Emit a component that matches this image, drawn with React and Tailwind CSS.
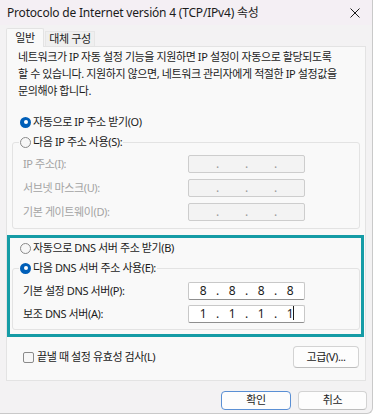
import React from "react";

const FONT = "font-['Noto_Sans','Noto_Sans_CJK_KR',sans-serif]";

function Radio({ checked }) {
  if (checked) {
    return (
      <span className="w-[11px] h-[11px] rounded-full bg-[#005fb8] flex items-center justify-center shrink-0">
        <span className="w-[4px] h-[4px] rounded-full bg-white" />
      </span>
    );
  }
  return (
    <span className="w-[11px] h-[11px] rounded-full border border-[#8a8a8a] bg-[#f7f7f7] shrink-0" />
  );
}

function IpBox({ values, disabled, cursor }) {
  const box = disabled
    ? "bg-[#f3f3f3] border-[#cdcdcd] text-[#9a9a9a]"
    : "bg-white border-[#c8c8c8] border-b-[#8f8f8f] text-[#1b1b1b]";
  return (
    <div
      className={`w-[117px] h-[18px] rounded-[2px] border ${box} flex items-center pl-[1px] text-[12px] leading-none`}
    >
      {[0, 1, 2, 3].map((i) => (
        <React.Fragment key={i}>
          <span className="w-[26px] text-center relative">
            {values ? values[i] : ""}
            {cursor && i === 3 && (
              <span className="absolute left-[16px] top-[-2px] w-px h-[14px] bg-[#1b1b1b]" />
            )}
          </span>
          {i < 3 && <span className="w-[3px] text-center">.</span>}
        </React.Fragment>
      ))}
    </div>
  );
}

function Row({ label, disabled, values, cursor }) {
  return (
    <div className="flex items-center h-[18px]">
      <span
        className={`w-[175px] pl-[10px] ${disabled ? "text-[#a3a3a3]" : "text-[#1b1b1b]"}`}
      >
        {label}
      </span>
      <IpBox values={values} disabled={disabled} cursor={cursor} />
    </div>
  );
}

function Group({ radioLabel, checked, children, className = "" }) {
  return (
    <fieldset
      className={`border border-[#e3e3e3] rounded-[3px] ${className}`}
    >
      <legend className="ml-[6px] px-[1px] flex items-center gap-[2px] h-[16px]">
        <Radio checked={checked} />
        <span className="text-[#1b1b1b]">{radioLabel}</span>
      </legend>
      {children}
    </fieldset>
  );
}

export default function App() {
  return (
    <div className={`w-[375px] h-[418px] bg-white ${FONT} text-[11px] tracking-[-0.4px] text-[#1b1b1b]`}>
      <div className="w-[373px] h-[414px] bg-[#f3f2f3] border-r border-b border-[#c9c9c9] rounded-br-[6px] flex flex-col">
        {/* title bar */}
        <div className="h-[25px] bg-[#f4eff4] flex items-center justify-between pl-[7px] pr-[12px]">
          <span className="text-[12px] tracking-[-0.2px]">
            Protocolo de Internet versión 4 (TCP/IPv4) 속성
          </span>
          <svg width="10" height="10" viewBox="0 0 10 10">
            <path d="M0.5 0.5 L9.5 9.5 M9.5 0.5 L0.5 9.5" stroke="#1b1b1b" strokeWidth="1" />
          </svg>
        </div>

        {/* tabs */}
        <div className="h-[21px] pl-[6px] flex items-end">
          <div className="h-[19px] w-[38px] bg-[#f9f9f9] border border-b-0 border-[#e3e3e3] rounded-t-[2px] flex items-center justify-center relative z-10 -mb-px">
            일반
          </div>
          <div className="h-[15px] w-[50px] ml-px bg-[#efefef] border border-b-0 border-[#e6e6e6] flex items-center justify-center">
            대체 구성
          </div>
        </div>

        {/* panel */}
        <div className="ml-[6px] w-[360px] h-[335px] border border-[#e3e3e3] bg-[#f9f9f9] px-[5px] flex flex-col">
          <p className="pl-[6px] pt-[1px] leading-[17px]">
            네트워크가 IP 자동 설정 기능을 지원하면 IP 설정이 자동으로 할당되도록
            <br />
            할 수 있습니다. 지원하지 않으면, 네트워크 관리자에게 적절한 IP 설정값을
            <br />
            문의해야 합니다.
          </p>

          <div className="mt-[15px] h-[16px] flex items-center gap-[2px] pl-[8px]">
            <Radio checked />
            <span>자동으로 IP 주소 받기(O)</span>
          </div>

          <Group radioLabel="다음 IP 주소 사용(S):" className="mt-[4px] h-[95px] pb-[7px]">
            <div className="flex flex-col gap-[6px] pt-[5px]">
              <Row label="IP 주소(I):" disabled />
              <Row label="서브넷 마스크(U):" disabled />
              <Row label="기본 게이트웨이(D):" disabled />
            </div>
          </Group>

          <div className="mt-[6px] -ml-[5px] w-[357px] border-[3px] border-[#159ca6] pl-[2px] pr-[1px] pt-[2px] pb-[4px]">
            <div className="h-[16px] flex items-center gap-[2px] pl-[8px]">
              <Radio />
              <span>자동으로 DNS 서버 주소 받기(B)</span>
            </div>
            <Group radioLabel="다음 DNS 서버 주소 사용(E):" checked className="mt-[4px] pb-[6px]">
              <div className="flex flex-col gap-[5px] pt-[6px]">
                <Row label="기본 설정 DNS 서버(P):" values={["8", "8", "8", "8"]} />
                <Row label="보조 DNS 서버(A):" values={["1", "1", "1", "1"]} cursor />
              </div>
            </Group>
          </div>

          <div className="mt-[9px] flex items-center justify-between pl-[11px] pr-[1px]">
            <div className="flex items-center gap-[3px]">
              <span className="w-[11px] h-[11px] rounded-[2px] border border-[#8a8a8a] bg-[#f7f7f7]" />
              <span>끝낼 때 설정 유효성 검사(L)</span>
            </div>
            <button className="w-[66px] h-[22px] rounded-[4px] border border-[#d3d3d3] border-b-[#bdbdbd] bg-[#fdfdfd]">
              고급(V)...
            </button>
          </div>
        </div>

        {/* dialog buttons */}
        <div className="mt-[10px] flex justify-end gap-[7px] pr-[5px]">
          <button className="w-[70px] h-[19px] rounded-[4px] border border-[#5a8fd4] bg-[#fdfdfd]">
            확인
          </button>
          <button className="w-[69px] h-[19px] rounded-[4px] border border-[#d3d3d3] border-b-[#bdbdbd] bg-[#fdfdfd]">
            취소
          </button>
        </div>
      </div>
    </div>
  );
}
